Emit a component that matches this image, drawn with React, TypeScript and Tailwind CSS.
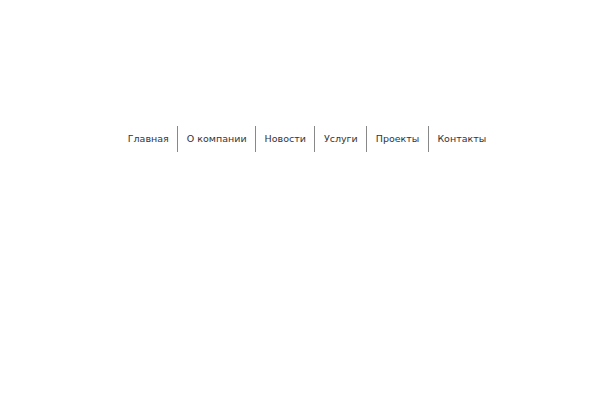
import React from "react";

const items = ["Главная", "О компании", "Новости", "Услуги", "Проекты", "Контакты"];

export default function App() {
  return (
    <div className="w-[600px] h-[400px] bg-white pt-[126px] pl-[14px] flex justify-center" style={{ fontFamily: '"DejaVu Sans", sans-serif' }}>
      <nav className="flex h-[26px]">
        {items.map((t, i) => (
          <a
            key={t}
            className={`flex items-center px-[8.5px] pt-px text-[9.5px] text-[#333] ${i > 0 ? "border-l border-[#888]" : ""}`}
          >
            {t}
          </a>
        ))}
      </nav>
    </div>
  );
}
